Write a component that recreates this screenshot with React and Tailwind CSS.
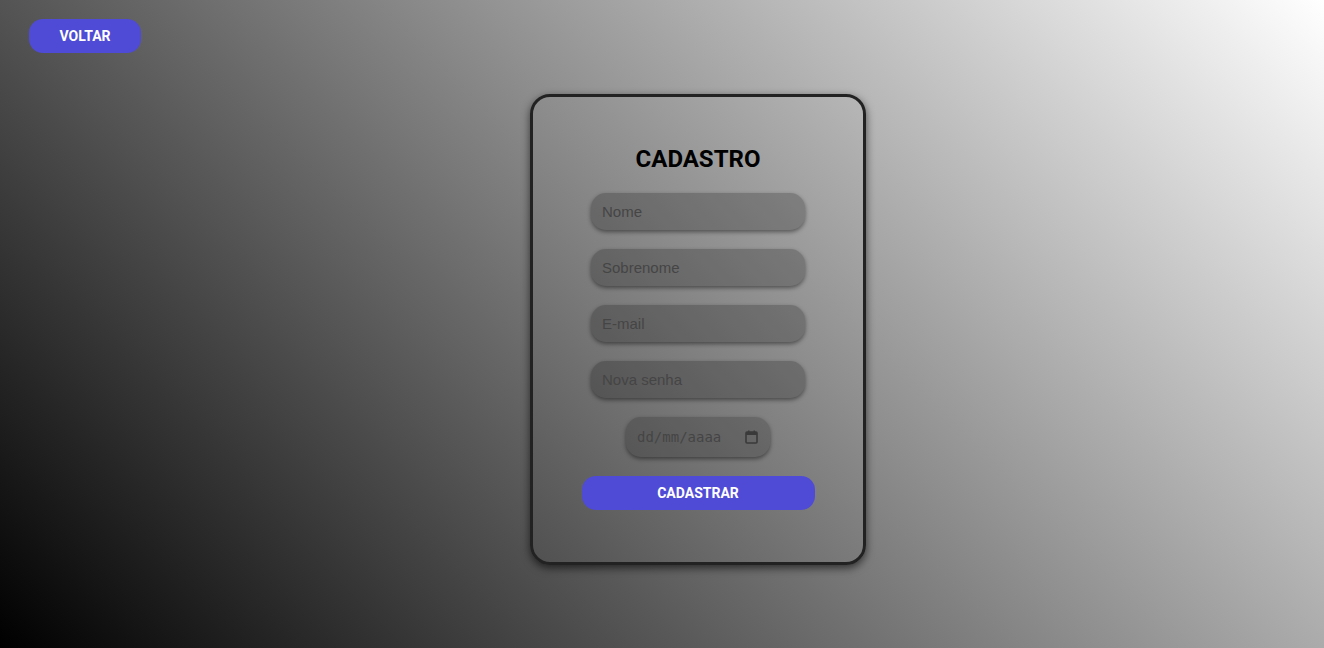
export default function App() {
  const fields = ['Nome', 'Sobrenome', 'E-mail', 'Nova senha'];

  return (
    <div className="min-h-[648px] w-full bg-[linear-gradient(45deg,#000,#fff)] pl-[29px] pt-[19px] pb-[80px] font-['Roboto',sans-serif]">
      <button className="flex h-[34px] w-[112px] items-center justify-center rounded-[14px] bg-[#4f4bd6] text-[14px] font-bold text-white">
        VOLTAR
      </button>

      <div className="ml-[501px] mt-[41px] flex h-[471px] w-[336px] flex-col items-center rounded-[20px] border-[3px] border-[#222] pt-[48px] shadow-[0_3px_8px_rgba(0,0,0,0.6)]">
        <h1 className="text-[24px] font-bold leading-[28px] text-black">CADASTRO</h1>

        <div className="mt-[20px] flex flex-col items-center gap-[19px]">
          {fields.map((f) => (
            <input
              key={f}
              placeholder={f}
              className="h-[37px] w-[214px] rounded-[15px] bg-[rgba(0,0,0,0.22)] px-[11px] font-['Liberation_Sans',sans-serif] text-[15px] text-[#333] shadow-[0_2px_4px_rgba(0,0,0,0.45)] outline-none placeholder:text-[#454545]"
            />
          ))}

          <div className="flex h-[40px] w-[144px] items-center justify-between rounded-[15px] bg-[rgba(0,0,0,0.18)] pl-[11px] pr-[12px] shadow-[0_2px_4px_rgba(0,0,0,0.45)]">
            <span className="font-['DejaVu_Sans_Mono',monospace] text-[14px] text-[#454545]">dd/mm/aaaa</span>
            <svg width="13" height="14" viewBox="0 0 13 14" fill="none">
              <rect x="1" y="2" width="11" height="11" rx="1" stroke="#3a3a3a" strokeWidth="1.6" />
              <rect x="1" y="2" width="11" height="3" fill="#3a3a3a" />
              <rect x="3" y="0.5" width="1.5" height="2.5" fill="#3a3a3a" />
              <rect x="8.5" y="0.5" width="1.5" height="2.5" fill="#3a3a3a" />
            </svg>
          </div>

          <button className="flex h-[34px] w-[233px] items-center justify-center rounded-[14px] bg-[#4f4bd6] text-[14px] font-bold text-white">
            CADASTRAR
          </button>
        </div>
      </div>
    </div>
  );
}
